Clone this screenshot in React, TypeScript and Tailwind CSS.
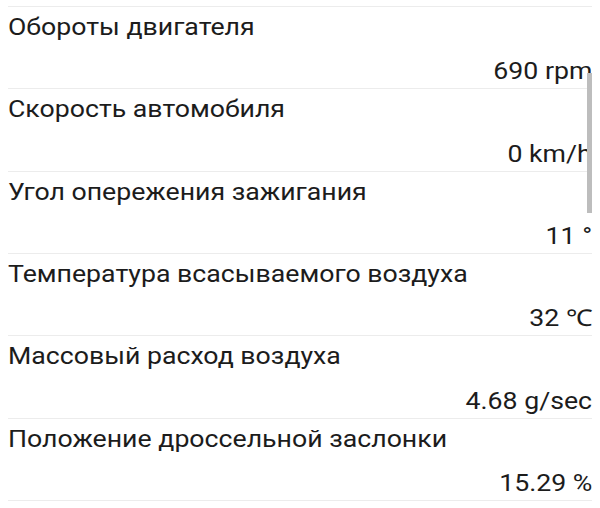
import React from "react";

type Reading = {
  name: string;
  value: string;
};

const readings: Reading[] = [
  { name: "Обороты двигателя", value: "690 rpm" },
  { name: "Скорость автомобиля", value: "0 km/h" },
  { name: "Угол опережения зажигания", value: "11 °" },
  { name: "Температура всасываемого воздуха", value: "32 ℃" },
  { name: "Массовый расход воздуха", value: "4.68 g/sec" },
  { name: "Положение дроссельной заслонки", value: "15.29 %" },
];

function ReadingRow({ item }: { item: Reading }) {
  return (
    <div className="h-[82.33px] border-t border-[#ececec] flex flex-col justify-between pt-[7px] pb-[3px]">
      <div className="flex justify-start">
        <span className="inline-block whitespace-nowrap origin-left scale-x-[1.16] text-[23px] leading-[27px] text-[#1c1c1c]">
          {item.name}
        </span>
      </div>
      <div className="flex justify-end">
        <span className="inline-block whitespace-nowrap origin-right scale-x-[1.16] text-[23px] leading-[27px] text-[#1c1c1c]">
          {item.value}
        </span>
      </div>
    </div>
  );
}

export default function App() {
  return (
    <div
      className="relative w-[600px] h-[508px] overflow-hidden bg-white pt-[6px] px-2"
      style={{ fontFamily: "Roboto, 'Noto Sans', sans-serif" }}
    >
      <div className="border-b border-[#ececec]">
        {readings.map((r) => (
          <ReadingRow key={r.name} item={r} />
        ))}
      </div>

      {/* scroll thumb */}
      <div className="absolute left-[587px] top-[73px] w-[5px] h-[140px] bg-[#bdbdbd]" />
    </div>
  );
}
